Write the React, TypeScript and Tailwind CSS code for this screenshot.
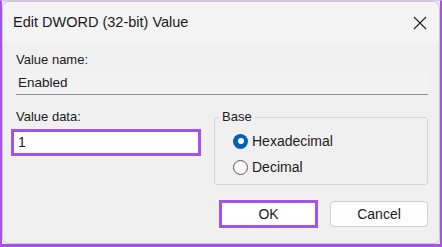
import React from 'react';

const font = { fontFamily: '"Segoe UI", "Liberation Sans", Arial, sans-serif' };

function Radio({ checked, label }: { checked?: boolean; label: string }) {
  return (
    <div className="flex h-[26px] items-center">
      {checked ? (
        <span className="flex h-[15px] w-[15px] items-center justify-center rounded-full bg-[#0060b8]">
          <span className="h-[6px] w-[6px] rounded-full bg-white" />
        </span>
      ) : (
        <span className="h-[15px] w-[15px] rounded-full border border-[#5a5a5a] bg-[#f7f7f7]" />
      )}
      <span className="ml-[4px] text-[14px] text-[#1b1b1b]">{label}</span>
    </div>
  );
}

export default function App() {
  return (
    <div
      className="h-[247px] w-[442px] overflow-hidden border-x-2 border-b-[3px] border-t border-[#a652e6] border-t-[#d9c2ef] bg-[#efe6f8]"
      style={font}
    >
      <div className="flex h-[243px] flex-col rounded-[7px] border border-[#c9c9c9] bg-[#f0f0f0]">
        {/* title bar */}
        <div className="flex h-[41px] shrink-0 items-center justify-between rounded-t-[7px] bg-[#f3f3f3] pl-[10px] pr-[12px]">
          <span className="text-[14.5px] text-[#1a1a1a]">Edit DWORD (32-bit) Value</span>
          <svg width="14" height="14" viewBox="0 0 14 14" className="mt-[1px]">
            <path d="M1 1 L13 13 M13 1 L1 13" stroke="#222" strokeWidth="1.1" fill="none" />
          </svg>
        </div>

        {/* body */}
        <div className="flex flex-1 flex-col pl-[8px] pr-[11px] pt-[9px]">
          <div className="pl-[5px] text-[13px] leading-[15px] text-[#1b1b1b]">Value name:</div>
          <div className="ml-[5px] mt-[6px] flex h-[22px] items-center border-b border-[#8a8a8a] bg-[#f2f2f2] pl-[2px] text-[13.5px] text-[#1b1b1b]">
            Enabled
          </div>

          <div className="mt-[14px] flex">
            <div className="w-[190px]">
              <div className="pl-[5px] text-[13px] leading-[15px] text-[#1b1b1b]">Value data:</div>
              <div className="mt-[5px] flex h-[27px] items-center border-[3px] border-[#a652e6] bg-white pl-[4px] text-[14px] text-[#1b1b1b]">
                1
              </div>
            </div>

            <div className="relative ml-[13px] mt-[8px] h-[68px] flex-1 rounded-[3px] border border-[#d6d6d6]">
              <span className="absolute -top-[9px] left-[4px] bg-[#f0f0f0] px-[3px] text-[13px] leading-[15px] text-[#1b1b1b]">
                Base
              </span>
              <div className="flex flex-col pl-[18px] pt-[10px]">
                <Radio checked label="Hexadecimal" />
                <Radio label="Decimal" />
              </div>
            </div>
          </div>

          <div className="mt-[15px] flex justify-end gap-[12px]">
            <button className="h-[28px] w-[99px] border-[3px] border-[#a652e6] bg-white text-[14px] text-[#1b1b1b]">
              OK
            </button>
            <button className="mt-[1px] h-[26px] w-[98px] rounded-[4px] border border-[#d0d0d0] bg-[#fdfdfd] text-[14px] text-[#1b1b1b]">
              Cancel
            </button>
          </div>
        </div>
      </div>
    </div>
  );
}
